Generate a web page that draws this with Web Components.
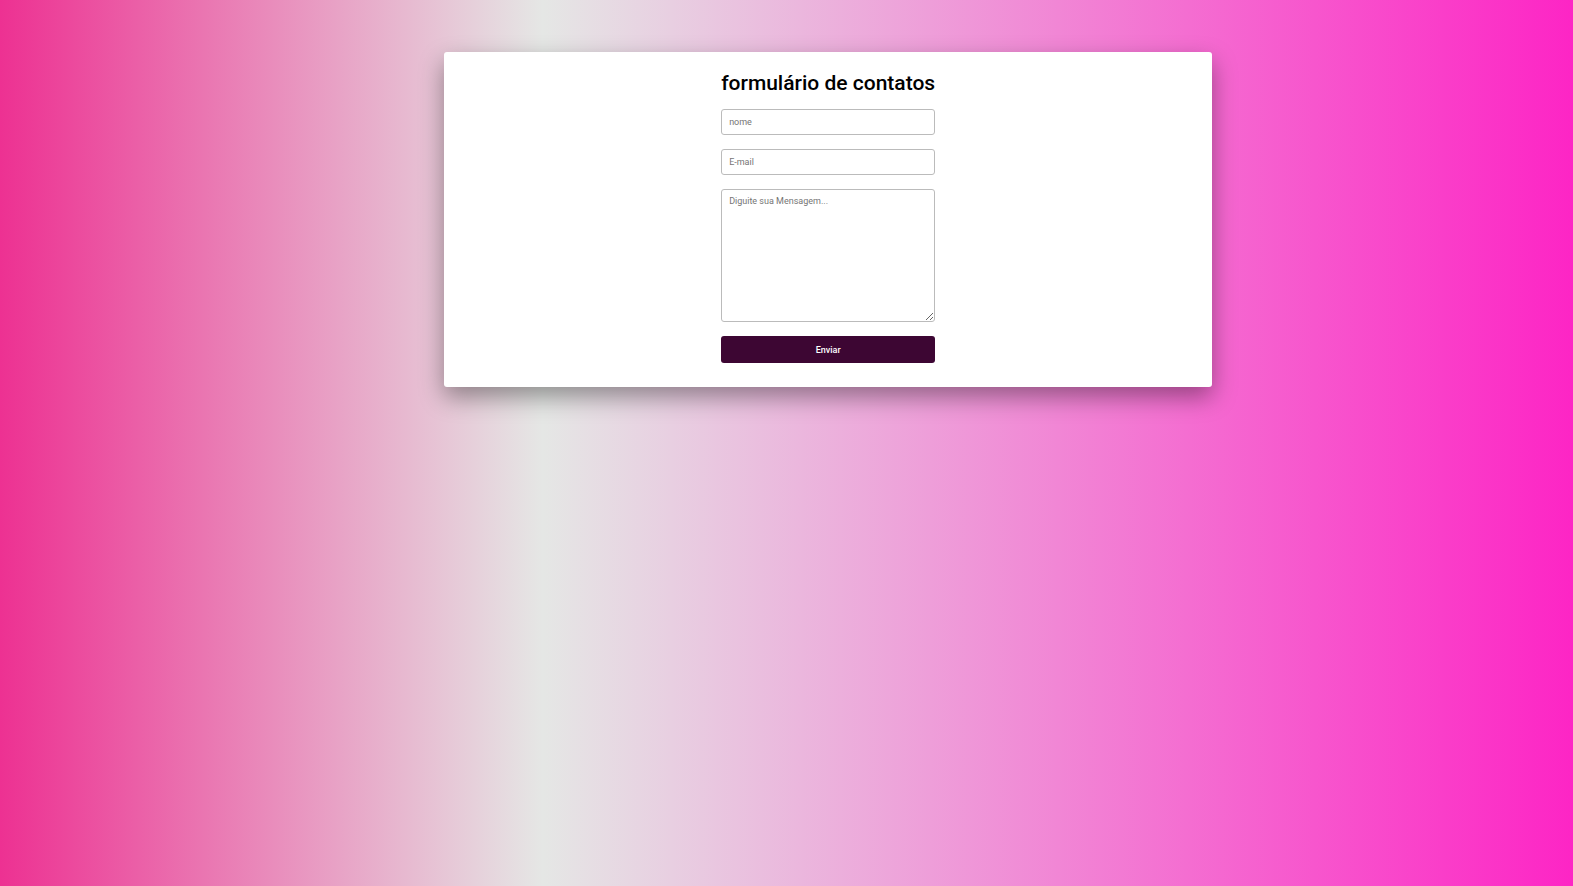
<!DOCTYPE html>
<html lang="pt-br">
<head>
<meta charset="utf-8">
<meta name="viewport" content="width=device-width, initial-scale=1">
<title>formulário de contatos</title>
<style>
html { min-height: 100%; background: linear-gradient(90deg, #ed3192 0%, #e5e7e5 34.5%, #fd25c5 100%); }
body { margin: 0; font-family: Roboto, sans-serif; color: #000; }
</style>
</head>
<body>
<contact-page>
  <contact-card heading="formulário de contatos">
    <text-field type="text" name="nome" label="nome"></text-field>
    <text-field type="email" name="email" label="E-mail"></text-field>
    <message-field name="mensagem" label="Diguite sua Mensagem..."></message-field>
    <send-button>Enviar</send-button>
  </contact-card>
</contact-page>
<script>
class ContactPage extends HTMLElement {
  constructor() {
    super();
    this.attachShadow({ mode: "open" }).innerHTML = `
      <style>
        :host { display: grid; grid-template-columns: 16fr minmax(0, 768px) 13fr; padding: 52px 0; }
        main { grid-column: 2; }
      </style>
      <main><slot></slot></main>`;
  }
}
class ContactCard extends HTMLElement {
  constructor() {
    super();
    this.attachShadow({ mode: "open" }).innerHTML = `
      <style>
        :host { display: block; background: #fff; border-radius: 3px; box-shadow: 0 10px 24px rgba(0, 0, 0, .38); }
        form { display: flex; flex-direction: column; align-items: center; padding: 18px 16px 24px; }
        h1 { margin: 0 0 13px; font-size: 21px; line-height: 26px; font-weight: 500; white-space: nowrap; }
        .fields { display: grid; gap: 14px; width: 214px; max-width: 100%; }
      </style>
      <form><h1></h1><div class="fields"><slot></slot></div></form>`;
  }
  connectedCallback() {
    this.shadowRoot.querySelector("h1").textContent = this.getAttribute("heading");
  }
}
const controlStyle = `
  :host { display: block; }
  input, textarea {
    display: block; box-sizing: border-box; width: 100%; margin: 0;
    border: 1px solid #bbb; border-radius: 3px; background: #fff; color: #000;
    font: 9px/12px Roboto, sans-serif; padding: 6px 7px;
  }
  ::placeholder { color: #757575; opacity: 1; }`;
class TextField extends HTMLElement {
  constructor() {
    super();
    this.attachShadow({ mode: "open" }).innerHTML =
      `<style>${controlStyle}</style><input id="control">`;
  }
  connectedCallback() {
    const input = this.shadowRoot.querySelector("input");
    const label = this.getAttribute("label");
    input.type = this.getAttribute("type");
    input.name = this.getAttribute("name");
    input.placeholder = label;
    input.setAttribute("aria-label", label);
  }
}
class MessageField extends HTMLElement {
  constructor() {
    super();
    this.attachShadow({ mode: "open" }).innerHTML =
      `<style>${controlStyle} textarea { height: 133px; padding: 5px 7px; resize: both; }</style><textarea></textarea>`;
  }
  connectedCallback() {
    const area = this.shadowRoot.querySelector("textarea");
    const label = this.getAttribute("label");
    area.name = this.getAttribute("name");
    area.placeholder = label;
    area.setAttribute("aria-label", label);
  }
}
class SendButton extends HTMLElement {
  constructor() {
    super();
    this.attachShadow({ mode: "open" }).innerHTML = `
      <style>
        :host { display: block; }
        button {
          display: block; width: 100%; height: 27px; margin: 0; padding: 0; border: 0; border-radius: 3px;
          background: #3d0633; color: #fff; font: 500 9px/12px Roboto, sans-serif; cursor: pointer;
        }
      </style>
      <button type="submit"><slot></slot></button>`;
  }
}
customElements.define("contact-page", ContactPage);
customElements.define("contact-card", ContactCard);
customElements.define("text-field", TextField);
customElements.define("message-field", MessageField);
customElements.define("send-button", SendButton);
</script>
</body>
</html>
